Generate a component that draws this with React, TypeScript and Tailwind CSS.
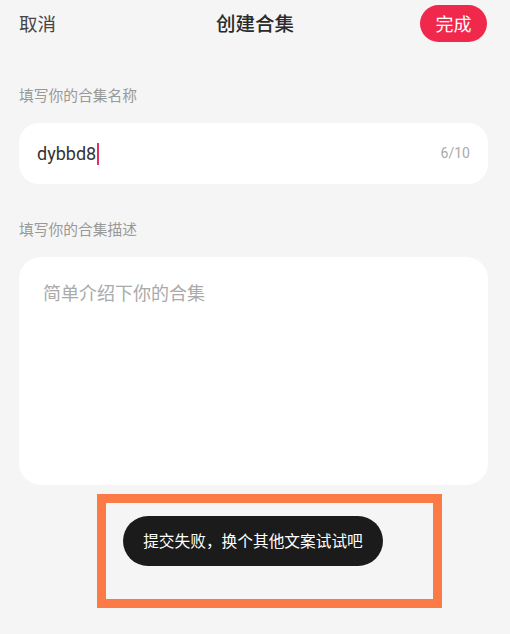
import React from 'react';

const font = { fontFamily: '"Noto Sans CJK SC", Roboto, "Noto Sans", sans-serif' };
const latin = { fontFamily: 'Roboto, "Noto Sans", sans-serif' };

export default function App() {
  return (
    <div className="w-[510px] h-[634px] bg-[#f5f5f5] overflow-hidden" style={font}>
      {/* Header */}
      <div className="h-[46px] pl-[19px] pr-[23px] flex items-center justify-between relative">
        <span className="text-[18.5px] leading-none text-[#444]">取消</span>
        <span className="absolute left-1/2 -translate-x-1/2 text-[19.5px] leading-none font-medium text-[#2a2a2a]">创建合集</span>
        <button className="w-[67px] h-[37px] rounded-full bg-[#f0284c] text-white text-[18px] leading-none">完成</button>
      </div>

      <div className="px-[19px]">
        <div className="mt-[39px] h-[20px] flex items-center text-[14.75px] text-[#999]">填写你的合集名称</div>

        {/* Name input */}
        <div className="mt-[18px] h-[61px] w-[469px] bg-white rounded-[20px] flex items-center pl-[18px] pr-[18px]">
          <span className="text-[18px] text-[#333]" style={latin}>dybbd8</span>
          <span className="ml-[1px] w-[2px] h-[22px] bg-[#e0325a]" />
          <span className="ml-auto text-[14px] text-[#aaa]" style={latin}>6/10</span>
        </div>

        <div className="mt-[35px] h-[20px] flex items-center text-[14.75px] text-[#999]">填写你的合集描述</div>

        {/* Description */}
        <div className="mt-[18px] h-[228px] w-[469px] bg-white rounded-[22px] pl-[24px] pt-[22px]">
          <span className="text-[18px] text-[#aaa]">简单介绍下你的合集</span>
        </div>

        {/* Annotation box with toast */}
        <div className="mt-[9px] ml-[78px] w-[345px] h-[114px] border-[9px] border-[#fb7a45] pt-[13px] pl-[17px]">
          <div className="w-[260px] h-[50px] rounded-full bg-[#1b1b1b] flex items-center justify-center text-[15.7px] text-white">
            提交失败，换个其他文案试试吧
          </div>
        </div>
      </div>
    </div>
  );
}
